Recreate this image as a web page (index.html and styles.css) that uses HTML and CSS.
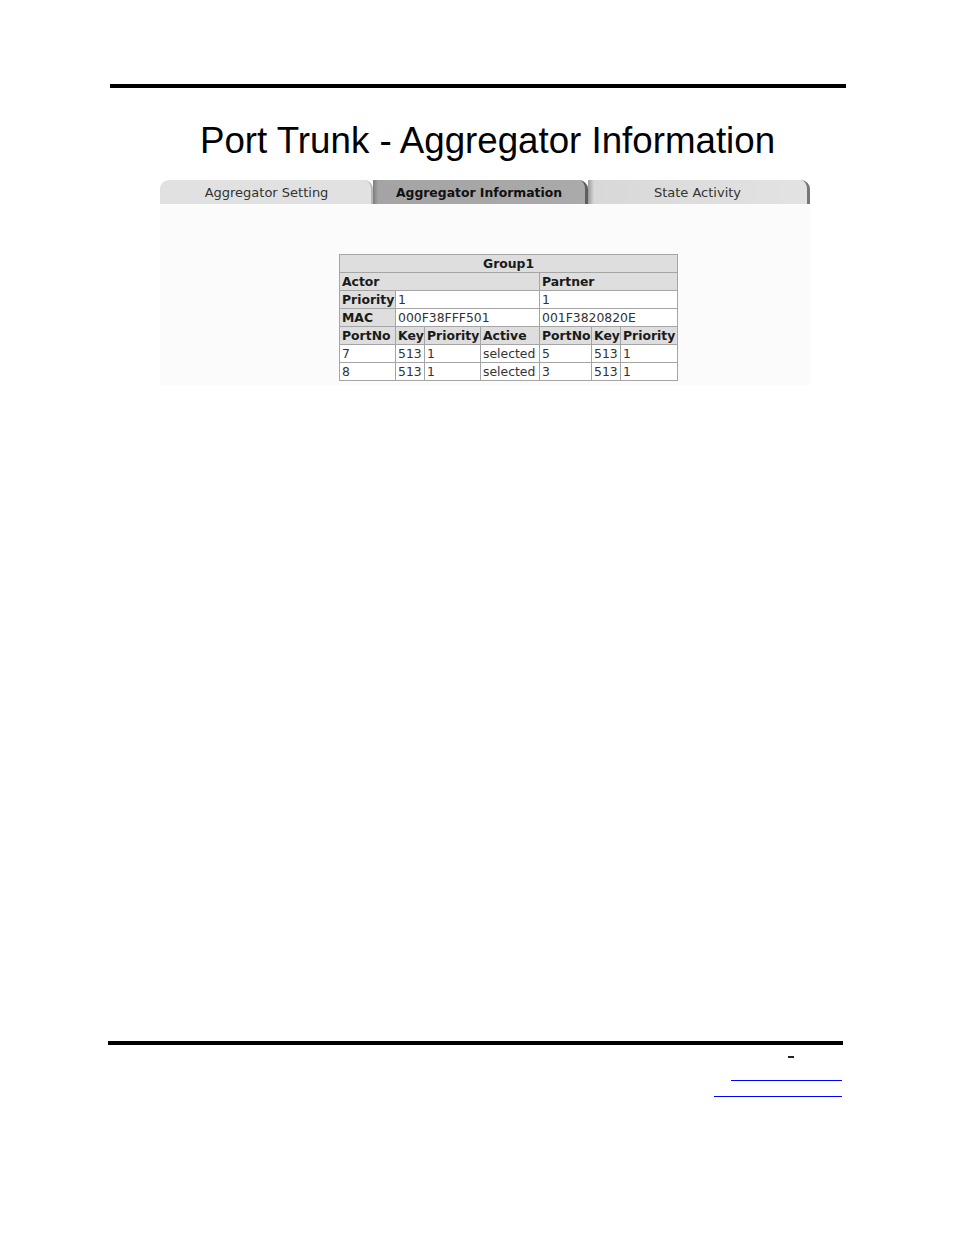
FILE: index.html
```html
<!DOCTYPE html>
<html>
<head>
<meta charset="utf-8">
<link rel="stylesheet" href="styles.css">
</head>
<body>
<div class="page">
  <div class="rule rule-top"></div>
  <h1 class="title">Port Trunk - Aggregator Information</h1>
  <div class="tabs">
    <div class="tab tab-first">Aggregator Setting</div>
    <div class="tab tab-active">Aggregator Information</div>
    <div class="tab tab-last">State Activity</div>
  </div>
  <div class="panel">
    <table class="info">
      <colgroup>
        <col class="c56"><col class="c29"><col class="c56"><col class="c59"><col class="c52"><col class="c29"><col class="c57">
      </colgroup>
      <tr><th colspan="7" class="center">Group1</th></tr>
      <tr><th colspan="4">Actor</th><th colspan="3">Partner</th></tr>
      <tr><th>Priority</th><td colspan="3">1</td><td colspan="3">1</td></tr>
      <tr><th>MAC</th><td colspan="3">000F38FFF501</td><td colspan="3">001F3820820E</td></tr>
      <tr><th>PortNo</th><th>Key</th><th>Priority</th><th>Active</th><th>PortNo</th><th>Key</th><th>Priority</th></tr>
      <tr><td>7</td><td>513</td><td>1</td><td>selected</td><td>5</td><td>513</td><td>1</td></tr>
      <tr><td>8</td><td>513</td><td>1</td><td>selected</td><td>3</td><td>513</td><td>1</td></tr>
    </table>
  </div>
  <div class="footer">
    <div class="rule rule-bottom"></div>
    <div class="dash-row"><span class="dash"></span></div>
    <div class="link-row link-row-a"><a class="link link-a" href="#"></a></div>
    <div class="link-row link-row-b"><a class="link link-b" href="#"></a></div>
  </div>
</div>
</body>
</html>
```
FILE: styles.css
```css
html, body {
  margin: 0;
  padding: 0;
  background: #ffffff;
}
.page {
  width: 954px;
  height: 1235px;
  padding-top: 84px;
  box-sizing: border-box;
  font-family: "DejaVu Sans", Verdana, sans-serif;
  color: #222;
}
.rule {
  background: #000;
}
.rule-top {
  margin-left: 110px;
  width: 736px;
  height: 4px;
}
.title {
  margin: 33px 0 0 0;
  padding-left: 200px;
  font-family: "Liberation Sans", Arial, sans-serif;
  font-weight: normal;
  font-size: 36.7px;
  line-height: 40px;
  color: #000;
  white-space: nowrap;
}
.tabs {
  margin: 19px 0 0 160px;
  width: 650px;
  height: 24px;
  display: flex;
}
.tab {
  height: 24px;
  box-sizing: border-box;
  display: flex;
  align-items: center;
  justify-content: center;
  font-size: 13px;
  color: #333;
  border-top-right-radius: 9px;
  padding-top: 1px;
}
.tab-first {
  width: 213px;
  background: #e1e1e1;
  border-top-left-radius: 9px;
  border-right: 2px solid #b8b8b8;
  padding-left: 2px;
}
.tab-active {
  width: 215px;
  background: linear-gradient(90deg, #7d7d7d 0px, #a4a4a4 5px, #aaaaaa 100%);
  font-weight: bold;
  font-size: 12.4px;
  color: #111;
  border-right: 3px solid #5e5e5e;
}
.tab-last {
  width: 222px;
  background: linear-gradient(90deg, #9a9a9a 0px, #d8d8d8 6px, #e3e3e3 100%);
  border-right: 3px solid #777;
}
.panel {
  margin-left: 160px;
  width: 650px;
  height: 181px;
  background: #fbfbfb;
  padding-top: 50px;
  box-sizing: border-box;
}
.info {
  margin-left: 179px;
  border-collapse: collapse;
  table-layout: fixed;
  width: 338px;
  font-size: 12.4px;
  background: #fff;
}
.c56 { width: 56px; }
.c29 { width: 29px; }
.c59 { width: 59px; }
.c52 { width: 52px; }
.c57 { width: 57px; }
.info th, .info td {
  border: 1px solid #a5a5a5;
  height: 17px;
  padding: 0 0 0 2px;
  text-align: left;
  white-space: nowrap;
  overflow: hidden;
  line-height: 16px;
}
.info th {
  background: #dedede;
  font-weight: bold;
  color: #1a1a1a;
}
.info td {
  color: #333;
}
.info th.center {
  text-align: center;
  padding-left: 0;
}
.footer {
  margin-top: 656px;
}
.rule-bottom {
  margin-left: 108px;
  width: 735px;
  height: 4px;
}
.dash-row {
  display: flex;
  padding-left: 788px;
  height: 13px;
  align-items: flex-end;
}
.dash {
  width: 6px;
  height: 2px;
  background: #222;
}
.link-row {
  display: flex;
  justify-content: flex-end;
  align-items: flex-end;
  width: 842px;
}
.link-row-a {
  height: 23px;
}
.link-row-b {
  height: 16px;
}
.link {
  display: block;
  height: 0;
  border-bottom: 1px solid #0000ff;
}
.link-a {
  width: 111px;
}
.link-b {
  width: 128px;
}
```
